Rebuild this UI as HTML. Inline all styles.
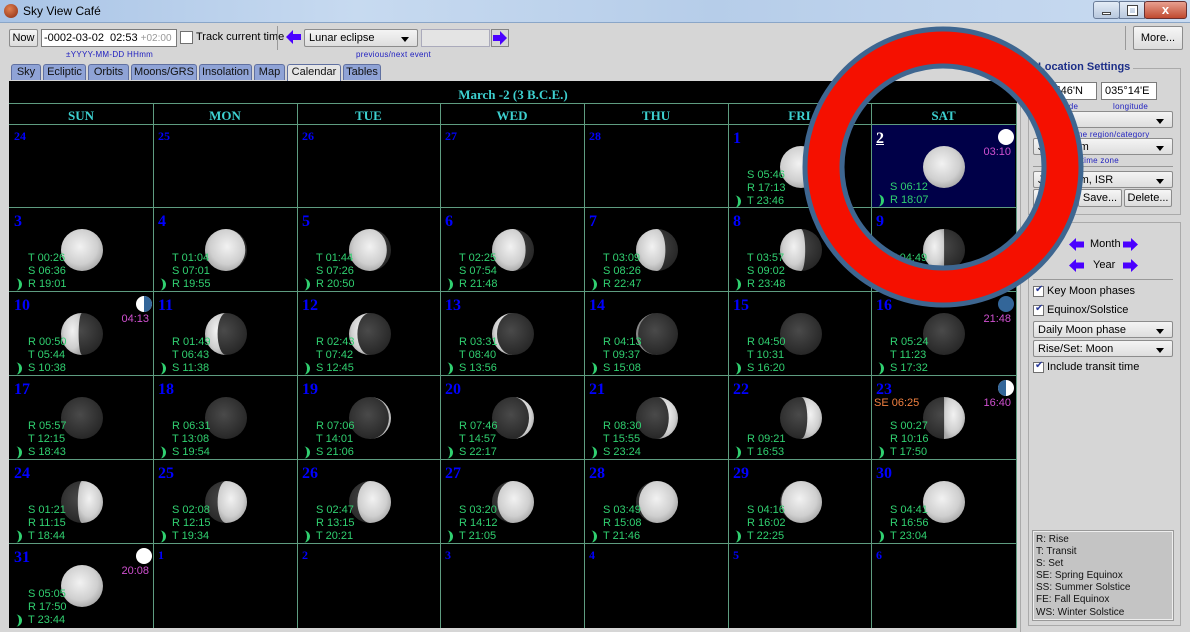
<!DOCTYPE html>
<html><head><meta charset="utf-8">
<style>
*{margin:0;padding:0;box-sizing:border-box}
body{width:1190px;height:632px;overflow:hidden;background:#d6d6d6;font-family:"Liberation Sans",sans-serif;font-size:11px;position:relative}
.a{position:absolute}
#title{left:0;top:0;width:1190px;height:23px;background:linear-gradient(90deg,#a9c4e6,#c7daf0 30%,#b6cde9 60%,#c9dbf1);border-bottom:1px solid #8aa6c8}
.btn{position:absolute;background:linear-gradient(#f6f6f6,#dcdcdc);border:1px solid #8c8c8c;border-radius:2px;font-size:11px;text-align:center;color:#000}
.fld{position:absolute;background:#fff;border:1px solid #7a7a7a}
.sel{position:absolute;background:linear-gradient(#f4f4f4,#dedede);border:1px solid #8c8c8c;border-radius:2px;font-size:11px;padding:2px 4px;color:#000}
.sel:after{content:"";position:absolute;right:8px;top:7px;border-left:4px solid transparent;border-right:4px solid transparent;border-top:5px solid #000}
.hint{position:absolute;font-size:8px;color:#2020c0;letter-spacing:.3px}
.tab{position:absolute;top:64px;height:16px;background:#8fa3d6;border:1px solid #6070a0;border-bottom:none;border-radius:3px 3px 0 0;font-size:11px;text-align:center;line-height:15px;color:#111}
.cb{position:absolute;width:11px;height:11px;background:#fff;border:1px solid #707070}
.cb.k:after{content:"✔";position:absolute;left:1px;top:-3px;font-size:10px;color:#2a3a9a}
#cal{left:9px;top:81px;width:1008px;height:547px;background:#000}
.h{position:absolute;color:#3dd0d0;font:bold 13px "Liberation Serif",serif;text-align:center}
.vl{position:absolute;width:1px;background:#5e9c80}
.hl{position:absolute;height:1px;background:#5e9c80;left:9px;width:1008px}
.c{position:absolute;width:143px;height:83px}
.n{position:absolute;left:4px;top:5px;color:#0000ff;font:bold 16px "Liberation Serif",serif}
.s{position:absolute;left:4px;top:4px;color:#0000ff;font:bold 12px "Liberation Serif",serif}
.m{position:absolute;left:50px;top:20px}
.t{position:absolute;left:18px;bottom:0px;color:#30d070;font-size:11px;line-height:13px}
.t div{position:relative;height:13px}
.cr{position:absolute;left:-14px;top:0px;width:10px;height:13px}
.ph{position:absolute;left:125px;top:3px}
.pt{position:absolute;right:4px;top:21px;color:#d050d0;font-size:11px}
</style></head><body>
<svg width="0" height="0" style="position:absolute"><defs>
<radialGradient id="L" cx="45%" cy="42%" r="60%"><stop offset="0" stop-color="#f2f2f2"/><stop offset=".7" stop-color="#cfcfcf"/><stop offset="1" stop-color="#a9a9a9"/></radialGradient>
<radialGradient id="D" cx="45%" cy="42%" r="60%"><stop offset="0" stop-color="#4a4a4a"/><stop offset="1" stop-color="#262626"/></radialGradient>
<symbol id="K" viewBox="0 0 10 13"><path d="M2,0.5 A6,6 0 0 1 2,12.5 A3,6 0 0 0 2,0.5Z" fill="#30d070"/></symbol>
</defs></svg>

<div id="title" class="a">
<div class="a" style="left:4px;top:4px;width:14px;height:14px;border-radius:50%;background:radial-gradient(circle at 40% 35%,#e08050,#8a2a10)"></div>
<div class="a" style="left:23px;top:4px;font-size:12px">Sky View Café</div>
<div class="a" style="left:1093px;top:1px;width:27px;height:18px;border:1px solid #6a7c98;border-radius:3px;background:linear-gradient(#e4ecf6,#b8c8de)"><div class="a" style="left:8px;top:10px;width:9px;height:3px;background:#fff;border:1px solid #444"></div></div>
<div class="a" style="left:1119px;top:1px;width:26px;height:18px;border:1px solid #6a7c98;background:linear-gradient(#e4ecf6,#b8c8de)"><div class="a" style="left:8px;top:4px;width:9px;height:9px;border:2px solid #fff;outline:1px solid #444"></div></div>
<div class="a" style="left:1144px;top:1px;width:43px;height:18px;border:1px solid #6a3030;border-radius:3px;background:linear-gradient(#e8a090,#c04a30);color:#fff;font-weight:bold;font-size:13px;text-align:center;line-height:16px">x</div>
</div>

<div class="btn" style="left:9px;top:29px;width:29px;height:18px;line-height:16px">Now</div>
<div class="fld" style="left:41px;top:29px;width:136px;height:18px;font-size:11px;padding:2px 2px">-0002-03-02&nbsp; 02:53 <span style="color:#999;font-size:10px">+02:00</span></div>
<div class="cb" style="left:180px;top:31px;width:13px;height:13px"></div>
<div class="a" style="left:196px;top:31px;font-size:11px">Track current time</div>
<div class="a" style="left:277px;top:26px;width:1px;height:24px;background:#999"></div>
<svg class="a" style="left:286px;top:30px" width="16" height="14"><path d="M0 7 L7 0 V4 H15 V10 H7 V14 Z" fill="#4a00ff"/></svg>
<div class="sel" style="left:304px;top:29px;width:114px;height:18px">Lunar eclipse</div>
<div class="a" style="left:421px;top:29px;width:69px;height:18px;border:1px solid #aab;background:#e4e4e4"></div>
<svg class="a" style="left:491px;top:29px" width="18" height="18"><rect x=".5" y=".5" width="17" height="17" fill="none" stroke="#333" stroke-dasharray="1,1"/><path d="M16 9 L9 2 V6 H2 V12 H9 V16 Z" fill="#4a00ff"/></svg>
<div class="hint" style="left:66px;top:50px">±YYYY-MM-DD HHmm</div>
<div class="hint" style="left:356px;top:50px">previous/next event</div>
<div class="btn" style="left:1133px;top:26px;width:50px;height:24px;line-height:22px">More...</div>
<div class="a" style="left:1125px;top:26px;width:1px;height:24px;background:#999"></div>

<div class="tab" style="left:11px;width:30px">Sky</div>
<div class="tab" style="left:43px;width:43px">Ecliptic</div>
<div class="tab" style="left:88px;width:41px">Orbits</div>
<div class="tab" style="left:131px;width:66px">Moons/GRS</div>
<div class="tab" style="left:199px;width:53px">Insolation</div>
<div class="tab" style="left:254px;width:31px">Map</div>
<div class="tab" style="left:287px;width:54px;background:#e6e6e6;height:17px">Calendar</div>
<div class="tab" style="left:343px;width:38px">Tables</div>

<div id="cal" class="a"></div>
<div class="h" style="left:9px;top:87px;width:1008px">March -2 (3 B.C.E.)</div>
<div class="hl" style="top:103px"></div>
<div class="hl" style="top:124px"></div>
<div class="hl" style="top:207px"></div>
<div class="hl" style="top:291px"></div>
<div class="hl" style="top:375px"></div>
<div class="hl" style="top:459px"></div>
<div class="hl" style="top:543px"></div>
<div class="vl" style="left:153px;top:103px;height:525px"></div>
<div class="vl" style="left:297px;top:103px;height:525px"></div>
<div class="vl" style="left:440px;top:103px;height:525px"></div>
<div class="vl" style="left:584px;top:103px;height:525px"></div>
<div class="vl" style="left:728px;top:103px;height:525px"></div>
<div class="vl" style="left:871px;top:103px;height:525px"></div>
<div class="vl" style="left:1016px;top:103px;height:525px"></div>
<div class="h" style="left:9px;top:108px;width:144px">SUN</div>
<div class="h" style="left:153px;top:108px;width:144px">MON</div>
<div class="h" style="left:297px;top:108px;width:143px">TUE</div>
<div class="h" style="left:440px;top:108px;width:144px">WED</div>
<div class="h" style="left:584px;top:108px;width:144px">THU</div>
<div class="h" style="left:728px;top:108px;width:143px">FRI</div>
<div class="h" style="left:871px;top:108px;width:145px">SAT</div>

<!-- row 1 -->
<div class="c" style="left:10px;top:125px"><b class="s">24</b></div>
<div class="c" style="left:154px;top:125px"><b class="s">25</b></div>
<div class="c" style="left:298px;top:125px"><b class="s">26</b></div>
<div class="c" style="left:441px;top:125px"><b class="s">27</b></div>
<div class="c" style="left:585px;top:125px"><b class="s">28</b></div>
<div class="c" style="left:729px;top:125px"><b class="n">1</b><svg class="m" width="44" height="44" viewBox="-22 -22 44 44"><circle r="21" fill="url(#L)"/></svg><div class="t"><div>S 05:46</div><div>R 17:13</div><div><svg class="cr"><use href="#K"/></svg>T 23:46</div></div></div>
<div class="c" style="left:872px;top:125px;background:#000048;height:82px"><b class="n" style="color:#fff;text-decoration:underline">2</b><svg class="m" width="44" height="44" viewBox="-22 -22 44 44"><circle r="21" fill="url(#L)"/></svg><div class="t"><div>S 06:12</div><div><svg class="cr"><use href="#K"/></svg>R 18:07</div></div><svg class="ph" width="18" height="18" viewBox="-9 -9 18 18"><circle r="8" fill="#fff"/></svg><div class="pt">03:10</div></div>

<!-- row 2 -->
<div class="c" style="left:10px;top:208px"><b class="n">3</b><svg class="m" width="44" height="44" viewBox="-22 -22 44 44"><circle r="21" fill="url(#L)"/></svg><div class="t"><div>T 00:26</div><div>S 06:36</div><div><svg class="cr"><use href="#K"/></svg>R 19:01</div></div></div>
<div class="c" style="left:154px;top:208px"><b class="n">4</b><svg class="m" width="44" height="44" viewBox="-22 -22 44 44"><circle r="21" fill="url(#D)"/><path transform="scale(-1,1)" d="M0,-21A21,21 0 0 1 0,21A19.3,21 0 0 1 0,-21Z" fill="url(#L)"/></svg><div class="t"><div>T 01:04</div><div>S 07:01</div><div><svg class="cr"><use href="#K"/></svg>R 19:55</div></div></div>
<div class="c" style="left:298px;top:208px"><b class="n">5</b><svg class="m" width="44" height="44" viewBox="-22 -22 44 44"><circle r="21" fill="url(#D)"/><path transform="scale(-1,1)" d="M0,-21A21,21 0 0 1 0,21A16.8,21 0 0 1 0,-21Z" fill="url(#L)"/></svg><div class="t"><div>T 01:44</div><div>S 07:26</div><div><svg class="cr"><use href="#K"/></svg>R 20:50</div></div></div>
<div class="c" style="left:441px;top:208px"><b class="n">6</b><svg class="m" width="44" height="44" viewBox="-22 -22 44 44"><circle r="21" fill="url(#D)"/><path transform="scale(-1,1)" d="M0,-21A21,21 0 0 1 0,21A12.6,21 0 0 1 0,-21Z" fill="url(#L)"/></svg><div class="t"><div>T 02:25</div><div>S 07:54</div><div><svg class="cr"><use href="#K"/></svg>R 21:48</div></div></div>
<div class="c" style="left:585px;top:208px"><b class="n">7</b><svg class="m" width="44" height="44" viewBox="-22 -22 44 44"><circle r="21" fill="url(#D)"/><path transform="scale(-1,1)" d="M0,-21A21,21 0 0 1 0,21A8.4,21 0 0 1 0,-21Z" fill="url(#L)"/></svg><div class="t"><div>T 03:09</div><div>S 08:26</div><div><svg class="cr"><use href="#K"/></svg>R 22:47</div></div></div>
<div class="c" style="left:729px;top:208px"><b class="n">8</b><svg class="m" width="44" height="44" viewBox="-22 -22 44 44"><circle r="21" fill="url(#D)"/><path transform="scale(-1,1)" d="M0,-21A21,21 0 0 1 0,21A4.2,21 0 0 1 0,-21Z" fill="url(#L)"/></svg><div class="t"><div>T 03:57</div><div>S 09:02</div><div><svg class="cr"><use href="#K"/></svg>R 23:48</div></div></div>
<div class="c" style="left:872px;top:208px"><b class="n">9</b><svg class="m" width="44" height="44" viewBox="-22 -22 44 44"><circle r="21" fill="url(#D)"/><path transform="scale(-1,1)" d="M0,-21A21,21 0 0 1 0,21A0.1,21 0 0 1 0,-21Z" fill="url(#L)"/></svg><div class="t"><div>T 04:49</div><div>S 09:45</div><div><svg class="cr"><use href="#K"/></svg>&nbsp;</div></div></div>

<!-- row 3 -->
<div class="c" style="left:10px;top:292px"><b class="n">10</b><svg class="m" width="44" height="44" viewBox="-22 -22 44 44"><circle r="21" fill="url(#D)"/><path transform="scale(-1,1)" d="M0,-21A21,21 0 0 1 0,21A3.4,21 0 0 0 0,-21Z" fill="url(#L)"/></svg><div class="t"><div>R 00:50</div><div>T 05:44</div><div><svg class="cr"><use href="#K"/></svg>S 10:38</div></div><svg class="ph" width="18" height="18" viewBox="-9 -9 18 18"><circle r="8" fill="#fff"/><path d="M0,-8A8,8 0 0 1 0,8Z" fill="#336699"/></svg><div class="pt">04:13</div></div>
<div class="c" style="left:154px;top:292px"><b class="n">11</b><svg class="m" width="44" height="44" viewBox="-22 -22 44 44"><circle r="21" fill="url(#D)"/><path transform="scale(-1,1)" d="M0,-21A21,21 0 0 1 0,21A8.4,21 0 0 0 0,-21Z" fill="url(#L)"/></svg><div class="t"><div>R 01:49</div><div>T 06:43</div><div><svg class="cr"><use href="#K"/></svg>S 11:38</div></div></div>
<div class="c" style="left:298px;top:292px"><b class="n">12</b><svg class="m" width="44" height="44" viewBox="-22 -22 44 44"><circle r="21" fill="url(#D)"/><path transform="scale(-1,1)" d="M0,-21A21,21 0 0 1 0,21A12.6,21 0 0 0 0,-21Z" fill="url(#L)"/></svg><div class="t"><div>R 02:43</div><div>T 07:42</div><div><svg class="cr"><use href="#K"/></svg>S 12:45</div></div></div>
<div class="c" style="left:441px;top:292px"><b class="n">13</b><svg class="m" width="44" height="44" viewBox="-22 -22 44 44"><circle r="21" fill="url(#D)"/><path transform="scale(-1,1)" d="M0,-21A21,21 0 0 1 0,21A16,21 0 0 0 0,-21Z" fill="url(#L)"/></svg><div class="t"><div>R 03:31</div><div>T 08:40</div><div><svg class="cr"><use href="#K"/></svg>S 13:56</div></div></div>
<div class="c" style="left:585px;top:292px"><b class="n">14</b><svg class="m" width="44" height="44" viewBox="-22 -22 44 44"><circle r="21" fill="url(#D)"/><path transform="scale(-1,1)" d="M0,-21A21,21 0 0 1 0,21A18.9,21 0 0 0 0,-21Z" fill="#888"/></svg><div class="t"><div>R 04:13</div><div>T 09:37</div><div><svg class="cr"><use href="#K"/></svg>S 15:08</div></div></div>
<div class="c" style="left:729px;top:292px"><b class="n">15</b><svg class="m" width="44" height="44" viewBox="-22 -22 44 44"><circle r="21" fill="url(#D)"/></svg><div class="t"><div>R 04:50</div><div>T 10:31</div><div><svg class="cr"><use href="#K"/></svg>S 16:20</div></div></div>
<div class="c" style="left:872px;top:292px"><b class="n">16</b><svg class="m" width="44" height="44" viewBox="-22 -22 44 44"><circle r="21" fill="url(#D)"/></svg><div class="t"><div>R 05:24</div><div>T 11:23</div><div><svg class="cr"><use href="#K"/></svg>S 17:32</div></div><svg class="ph" width="18" height="18" viewBox="-9 -9 18 18"><circle r="8" fill="#336699"/></svg><div class="pt">21:48</div></div>

<!-- row 4 -->
<div class="c" style="left:10px;top:376px"><b class="n">17</b><svg class="m" width="44" height="44" viewBox="-22 -22 44 44"><circle r="21" fill="url(#D)"/></svg><div class="t"><div>R 05:57</div><div>T 12:15</div><div><svg class="cr"><use href="#K"/></svg>S 18:43</div></div></div>
<div class="c" style="left:154px;top:376px"><b class="n">18</b><svg class="m" width="44" height="44" viewBox="-22 -22 44 44"><circle r="21" fill="url(#D)"/></svg><div class="t"><div>R 06:31</div><div>T 13:08</div><div><svg class="cr"><use href="#K"/></svg>S 19:54</div></div></div>
<div class="c" style="left:298px;top:376px"><b class="n">19</b><svg class="m" width="44" height="44" viewBox="-22 -22 44 44"><circle r="21" fill="url(#D)"/><path d="M0,-21A21,21 0 0 1 0,21A18.9,21 0 0 0 0,-21Z" fill="#bbb"/></svg><div class="t"><div>R 07:06</div><div>T 14:01</div><div><svg class="cr"><use href="#K"/></svg>S 21:06</div></div></div>
<div class="c" style="left:441px;top:376px"><b class="n">20</b><svg class="m" width="44" height="44" viewBox="-22 -22 44 44"><circle r="21" fill="url(#D)"/><path d="M0,-21A21,21 0 0 1 0,21A16,21 0 0 0 0,-21Z" fill="url(#L)"/></svg><div class="t"><div>R 07:46</div><div>T 14:57</div><div><svg class="cr"><use href="#K"/></svg>S 22:17</div></div></div>
<div class="c" style="left:585px;top:376px"><b class="n">21</b><svg class="m" width="44" height="44" viewBox="-22 -22 44 44"><circle r="21" fill="url(#D)"/><path d="M0,-21A21,21 0 0 1 0,21A11.8,21 0 0 0 0,-21Z" fill="url(#L)"/></svg><div class="t"><div>R 08:30</div><div>T 15:55</div><div><svg class="cr"><use href="#K"/></svg>S 23:24</div></div></div>
<div class="c" style="left:729px;top:376px"><b class="n">22</b><svg class="m" width="44" height="44" viewBox="-22 -22 44 44"><circle r="21" fill="url(#D)"/><path d="M0,-21A21,21 0 0 1 0,21A6.3,21 0 0 0 0,-21Z" fill="url(#L)"/></svg><div class="t"><div>R 09:21</div><div><svg class="cr"><use href="#K"/></svg>T 16:53</div></div></div>
<div class="c" style="left:872px;top:376px"><b class="n">23</b><div class="a" style="left:2px;top:21px;color:#f08040;font-size:11px">SE 06:25</div><svg class="m" width="44" height="44" viewBox="-22 -22 44 44"><circle r="21" fill="url(#D)"/><path d="M0,-21A21,21 0 0 1 0,21A0.1,21 0 0 0 0,-21Z" fill="url(#L)"/></svg><div class="t"><div>S 00:27</div><div>R 10:16</div><div><svg class="cr"><use href="#K"/></svg>T 17:50</div></div><svg class="ph" width="18" height="18" viewBox="-9 -9 18 18"><circle r="8" fill="#fff"/><path d="M0,-8A8,8 0 0 0 0,8Z" fill="#336699"/></svg><div class="pt">16:40</div></div>

<!-- row 5 -->
<div class="c" style="left:10px;top:460px"><b class="n">24</b><svg class="m" width="44" height="44" viewBox="-22 -22 44 44"><circle r="21" fill="url(#D)"/><path d="M0,-21A21,21 0 0 1 0,21A4.2,21 0 0 1 0,-21Z" fill="url(#L)"/></svg><div class="t"><div>S 01:21</div><div>R 11:15</div><div><svg class="cr"><use href="#K"/></svg>T 18:44</div></div></div>
<div class="c" style="left:154px;top:460px"><b class="n">25</b><svg class="m" width="44" height="44" viewBox="-22 -22 44 44"><circle r="21" fill="url(#D)"/><path d="M0,-21A21,21 0 0 1 0,21A8.4,21 0 0 1 0,-21Z" fill="url(#L)"/></svg><div class="t"><div>S 02:08</div><div>R 12:15</div><div><svg class="cr"><use href="#K"/></svg>T 19:34</div></div></div>
<div class="c" style="left:298px;top:460px"><b class="n">26</b><svg class="m" width="44" height="44" viewBox="-22 -22 44 44"><circle r="21" fill="url(#D)"/><path d="M0,-21A21,21 0 0 1 0,21A12.6,21 0 0 1 0,-21Z" fill="url(#L)"/></svg><div class="t"><div>S 02:47</div><div>R 13:15</div><div><svg class="cr"><use href="#K"/></svg>T 20:21</div></div></div>
<div class="c" style="left:441px;top:460px"><b class="n">27</b><svg class="m" width="44" height="44" viewBox="-22 -22 44 44"><circle r="21" fill="url(#D)"/><path d="M0,-21A21,21 0 0 1 0,21A15.5,21 0 0 1 0,-21Z" fill="url(#L)"/></svg><div class="t"><div>S 03:20</div><div>R 14:12</div><div><svg class="cr"><use href="#K"/></svg>T 21:05</div></div></div>
<div class="c" style="left:585px;top:460px"><b class="n">28</b><svg class="m" width="44" height="44" viewBox="-22 -22 44 44"><circle r="21" fill="url(#D)"/><path d="M0,-21A21,21 0 0 1 0,21A18.1,21 0 0 1 0,-21Z" fill="url(#L)"/></svg><div class="t"><div>S 03:49</div><div>R 15:08</div><div><svg class="cr"><use href="#K"/></svg>T 21:46</div></div></div>
<div class="c" style="left:729px;top:460px"><b class="n">29</b><svg class="m" width="44" height="44" viewBox="-22 -22 44 44"><circle r="21" fill="url(#D)"/><path d="M0,-21A21,21 0 0 1 0,21A19.7,21 0 0 1 0,-21Z" fill="url(#L)"/></svg><div class="t"><div>S 04:16</div><div>R 16:02</div><div><svg class="cr"><use href="#K"/></svg>T 22:25</div></div></div>
<div class="c" style="left:872px;top:460px"><b class="n">30</b><svg class="m" width="44" height="44" viewBox="-22 -22 44 44"><circle r="21" fill="url(#L)"/></svg><div class="t"><div>S 04:41</div><div>R 16:56</div><div><svg class="cr"><use href="#K"/></svg>T 23:04</div></div></div>

<!-- row 6 -->
<div class="c" style="left:10px;top:544px"><b class="n">31</b><svg class="m" width="44" height="44" viewBox="-22 -22 44 44"><circle r="21" fill="url(#L)"/></svg><div class="t"><div>S 05:05</div><div>R 17:50</div><div><svg class="cr"><use href="#K"/></svg>T 23:44</div></div><svg class="ph" width="18" height="18" viewBox="-9 -9 18 18"><circle r="8" fill="#fff"/></svg><div class="pt">20:08</div></div>
<div class="c" style="left:154px;top:544px"><b class="s">1</b></div>
<div class="c" style="left:298px;top:544px"><b class="s">2</b></div>
<div class="c" style="left:441px;top:544px"><b class="s">3</b></div>
<div class="c" style="left:585px;top:544px"><b class="s">4</b></div>
<div class="c" style="left:729px;top:544px"><b class="s">5</b></div>
<div class="c" style="left:872px;top:544px"><b class="s">6</b></div>

<!-- right panel -->
<div class="a" style="left:1020px;top:56px;width:1px;height:576px;background:#aaa"></div>
<div class="a" style="left:1028px;top:68px;width:153px;height:147px;border:1px solid #aaa"></div>
<div class="a" style="left:1035px;top:61px;background:#d6d6d6;padding:0 3px;color:#1c2e88;font-weight:bold;font-size:11px">Location Settings</div>
<div class="fld" style="left:1040px;top:82px;width:57px;height:18px;padding:2px 3px">31°46'N</div>
<div class="fld" style="left:1101px;top:82px;width:56px;height:18px;padding:2px 3px">035°14'E</div>
<div class="hint" style="left:1050px;top:102px">latitude</div>
<div class="hint" style="left:1113px;top:102px">longitude</div>
<div class="sel" style="left:1033px;top:111px;width:140px;height:17px">Asia</div>
<div class="hint" style="left:1050px;top:130px">time zone region/category</div>
<div class="sel" style="left:1033px;top:138px;width:140px;height:17px">Jerusalem</div>
<div class="hint" style="left:1050px;top:156px">specific time zone</div>
<div class="a" style="left:1033px;top:166px;width:140px;height:1px;background:#999"></div>
<div class="sel" style="left:1033px;top:171px;width:140px;height:17px">Jerusalem, ISR</div>
<div class="btn" style="left:1033px;top:189px;width:44px;height:18px;line-height:16px">Re...</div>
<div class="btn" style="left:1078px;top:189px;width:44px;height:18px;line-height:16px">Save...</div>
<div class="btn" style="left:1124px;top:189px;width:48px;height:18px;line-height:16px">Delete...</div>

<div class="a" style="left:1028px;top:222px;width:153px;height:404px;border:1px solid #aaa"></div>
<svg class="a" style="left:1069px;top:238px" width="16" height="13"><path d="M0 6.5 L7 0 V3.5 H15 V9.5 H7 V13 Z" fill="#4a00ff"/></svg>
<div class="a" style="left:1090px;top:238px">Month</div>
<svg class="a" style="left:1122px;top:238px" width="16" height="13"><path d="M16 6.5 L9 0 V3.5 H1 V9.5 H9 V13 Z" fill="#4a00ff"/></svg>
<svg class="a" style="left:1069px;top:259px" width="16" height="13"><path d="M0 6.5 L7 0 V3.5 H15 V9.5 H7 V13 Z" fill="#4a00ff"/></svg>
<div class="a" style="left:1093px;top:259px">Year</div>
<svg class="a" style="left:1122px;top:259px" width="16" height="13"><path d="M16 6.5 L9 0 V3.5 H1 V9.5 H9 V13 Z" fill="#4a00ff"/></svg>
<div class="a" style="left:1033px;top:279px;width:140px;height:1px;background:#999"></div>
<div class="cb k" style="left:1033px;top:286px"></div><div class="a" style="left:1047px;top:285px">Key Moon phases</div>
<div class="cb k" style="left:1033px;top:305px"></div><div class="a" style="left:1047px;top:304px">Equinox/Solstice</div>
<div class="sel" style="left:1033px;top:321px;width:140px;height:17px">Daily Moon phase</div>
<div class="sel" style="left:1033px;top:340px;width:140px;height:17px">Rise/Set: Moon</div>
<div class="cb k" style="left:1033px;top:362px"></div><div class="a" style="left:1047px;top:361px">Include transit time</div>

<div class="a" style="left:1033px;top:531px;width:140px;height:89px;border:1px solid #eee;outline:1px solid #999;background:#c4c4c4;padding:2px 2px;font-size:10px;line-height:12.1px;color:#111">R: Rise<br>T: Transit<br>S: Set<br>SE: Spring Equinox<br>SS: Summer Solstice<br>FE: Fall Equinox<br>WS: Winter Solstice</div>

<!-- red ring -->
<svg class="a" style="left:0;top:0" width="1190" height="632">
<circle cx="943" cy="167" r="119.5" fill="none" stroke="#f51000" stroke-width="37"/>
<circle cx="943" cy="167" r="138" fill="none" stroke="#3e6690" stroke-width="5"/>
<circle cx="943" cy="167" r="101" fill="none" stroke="#3e6690" stroke-width="5"/>
</svg>
</body></html>
